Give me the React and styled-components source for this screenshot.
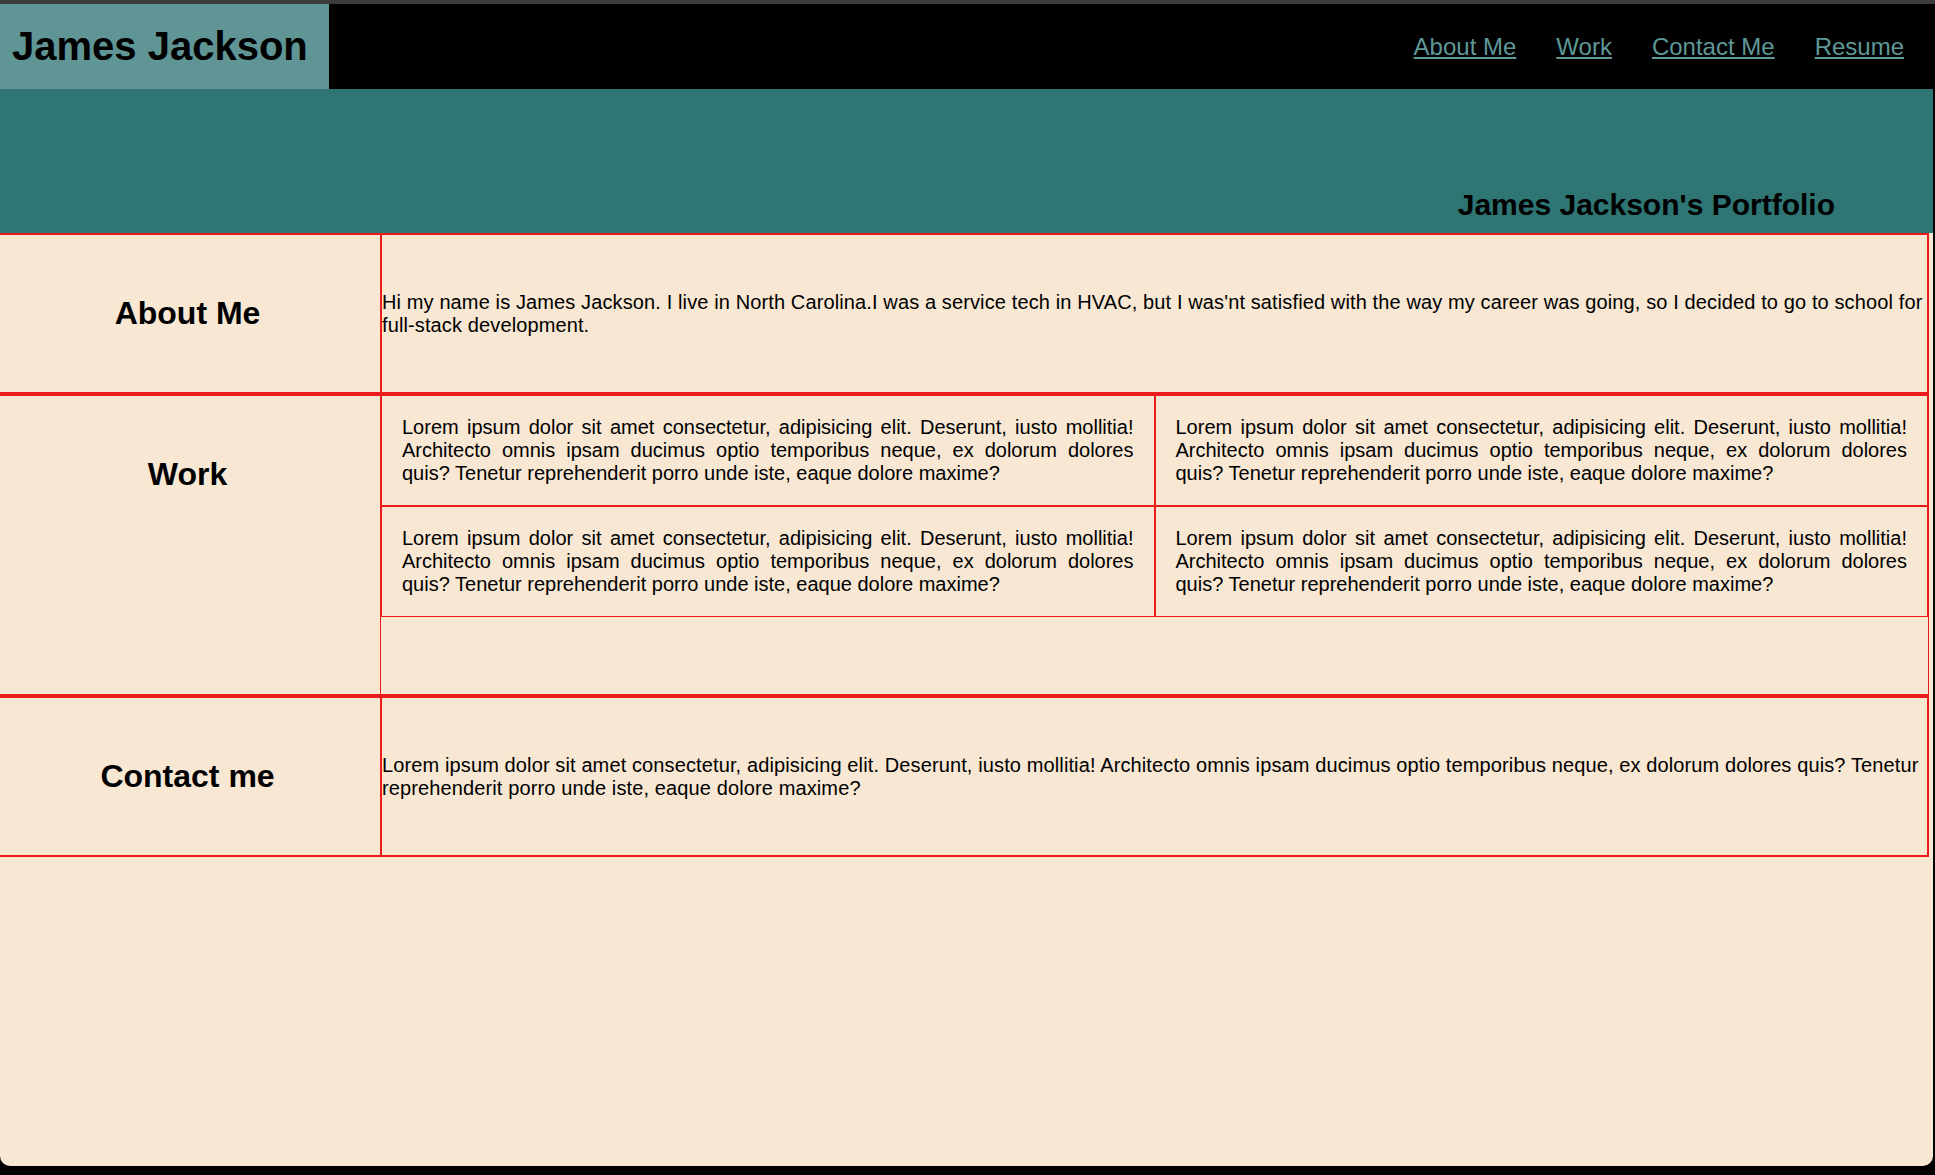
import React from "react";
import styled, { createGlobalStyle } from "styled-components";

const Global = createGlobalStyle`
  html, body { margin: 0; padding: 0; background: #000; }
  body { font-family: "Liberation Sans", Arial, sans-serif; font-size: 20px; color: #000; }
  * { box-sizing: border-box; }
`;

const RED = "#ec1c1c";
const CREAM = "#f7e7d3";

const Frame = styled.div`
  width: 1935px;
  height: 1175px;
  display: flex;
  flex-direction: column;
  background: #000;
`;

const TitleBarEdge = styled.div`
  height: 4px;
  background: #3c3c3c;
  flex-shrink: 0;
`;

const Page = styled.div`
  width: 1933px;
  height: 1162px;
  background: ${CREAM};
  border-bottom-left-radius: 10px;
  border-bottom-right-radius: 10px;
  overflow: hidden;
  display: flex;
  flex-direction: column;
`;

const Header = styled.header`
  height: 85px;
  background: #000;
  display: flex;
  align-items: center;
  justify-content: space-between;
  flex-shrink: 0;
`;

const Logo = styled.h1`
  margin: 0;
  width: 329px;
  height: 100%;
  background: #5f9595;
  display: flex;
  align-items: center;
  padding-left: 12px;
  font-size: 40px;
  font-weight: 700;
  color: #000;
`;

const Nav = styled.nav`
  display: flex;
  gap: 40px;
  padding-right: 29px;
`;

const NavLink = styled.a`
  font-size: 24px;
  color: #5f9898;
  text-decoration: underline;
  cursor: pointer;
`;

const Hero = styled.div`
  height: 144px;
  background: #2e7574;
  display: flex;
  align-items: flex-end;
  justify-content: flex-end;
  padding: 0 98px 11px 0;
  flex-shrink: 0;
`;

const HeroTitle = styled.h2`
  margin: 0;
  font-size: 30px;
  font-weight: 700;
`;

const Section = styled.section`
  display: flex;
  margin-right: 4px;
  border-top: 2px solid ${RED};
  border-bottom: 2px solid ${RED};
`;

const SideHeading = styled.h2`
  margin: 0;
  width: 380px;
  flex-shrink: 0;
  padding: 60px 5px 60px 0;
  text-align: center;
  font-size: 32px;
  font-weight: 700;
`;

const TextPanel = styled.div`
  flex: 1;
  display: flex;
  align-items: center;
  border-left: 2px solid ${RED};
  border-right: 2px solid ${RED};
`;

const Para = styled.p`
  margin: 0;
  font-size: 20px;
  line-height: normal;
  letter-spacing: 0.12px;
`;

const WorkPanel = styled.div`
  flex: 1;
  min-height: 298px;
  border-left: 1px solid ${RED};
  border-right: 1px solid ${RED};
`;

const CardGrid = styled.div`
  display: grid;
  grid-template-columns: 1fr 1fr;
`;

const Card = styled.div`
  border: 1px solid ${RED};
  padding: 20px;
  text-align: justify;
  font-size: 20px;
  &:nth-child(-n + 2) {
    border-top: none;
  }
`;

const lorem =
  "Lorem ipsum dolor sit amet consectetur, adipisicing elit. Deserunt, iusto mollitia! Architecto omnis ipsam ducimus optio temporibus neque, ex dolorum dolores quis? Tenetur reprehenderit porro unde iste, eaque dolore maxime?";

const links = ["About Me", "Work", "Contact Me", "Resume"];

export default function App() {
  return (
    <>
      <Global />
      <Frame>
        <TitleBarEdge />
        <Page>
          <Header>
            <Logo>James Jackson</Logo>
            <Nav>
              {links.map((l) => (
                <NavLink key={l} href="#">
                  {l}
                </NavLink>
              ))}
            </Nav>
          </Header>
          <Hero>
            <HeroTitle>James Jackson's Portfolio</HeroTitle>
          </Hero>
          <Section>
            <SideHeading>About Me</SideHeading>
            <TextPanel>
              <Para>
                Hi my name is James Jackson. I live in North Carolina.I was a
                service tech in HVAC, but I was'nt satisfied with the way my
                career was going, so I decided to go to school for full-stack
                development.
              </Para>
            </TextPanel>
          </Section>
          <Section>
            <SideHeading>Work</SideHeading>
            <WorkPanel>
              <CardGrid>
                {[0, 1, 2, 3].map((i) => (
                  <Card key={i}>{lorem}</Card>
                ))}
              </CardGrid>
            </WorkPanel>
          </Section>
          <Section>
            <SideHeading>Contact me</SideHeading>
            <TextPanel>
              <Para>{lorem}</Para>
            </TextPanel>
          </Section>
        </Page>
      </Frame>
    </>
  );
}
